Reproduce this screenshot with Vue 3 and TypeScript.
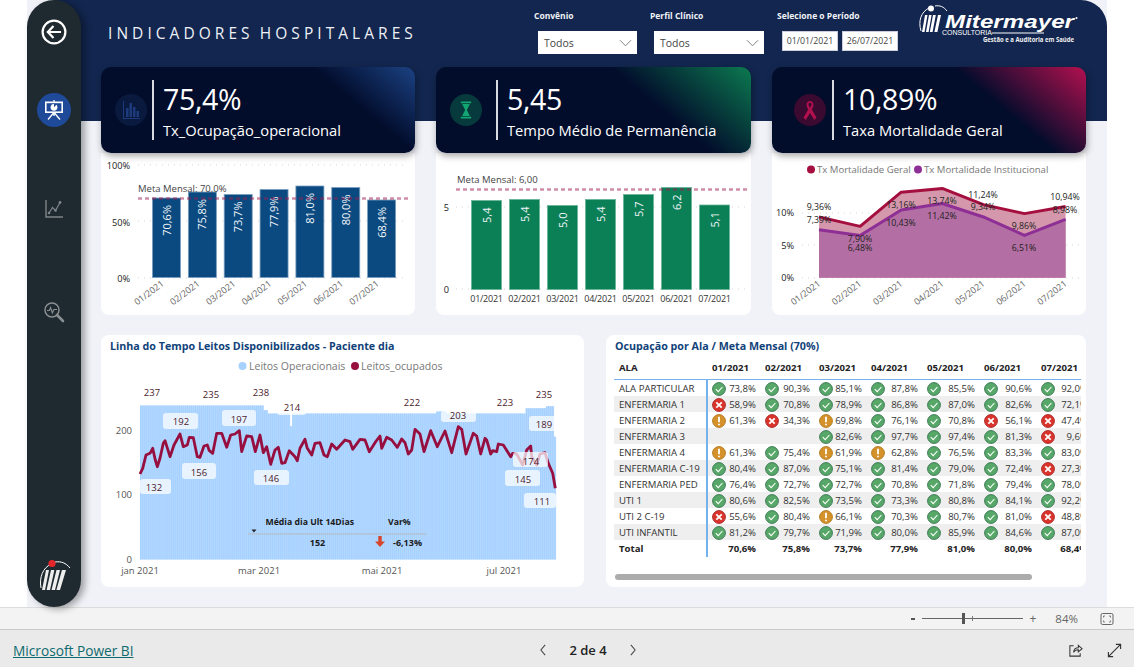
<template>
  <div class="viewer">
    <div class="report">
      <!-- menu lateral -->
      <aside class="sidebar">
        <svg class="nav-back" viewBox="0 0 26 26">
          <circle cx="13" cy="13" r="11.4" fill="none" stroke="#fff" stroke-width="2.2" />
          <path d="M20 13H7M12.5 7 6.8 13l5.7 6" fill="none" stroke="#fff" stroke-width="2.2" />
        </svg>
        <div class="nav-active">
          <svg viewBox="0 0 22 22" width="22" height="22">
            <rect x="2" y="2.5" width="18" height="11.5" fill="#fff" />
            <rect x="3.6" y="4.2" width="14.8" height="8.2" fill="#1f4a99" />
            <circle cx="11" cy="8.3" r="3.4" fill="#fff" />
            <path d="M11 8.3V4.9h3.2z" fill="#1f4a99" />
            <path d="M11 1v2M11 14v3M10.5 14 5 20.5M11.5 14l5.5 6.5" stroke="#fff" stroke-width="1.3" fill="none" />
          </svg>
        </div>
        <svg class="nav-trend" viewBox="0 0 20 20">
          <path d="M2 1v17h17" fill="none" stroke="#7f8588" stroke-width="1.4" />
          <path d="M5 14l3.5-5.5 3 3L16 3.5" fill="none" stroke="#7f8588" stroke-width="1.2" />
          <circle cx="5" cy="14" r="1.3" fill="#7f8588" />
          <circle cx="11.5" cy="11.5" r="1.3" fill="#7f8588" />
          <circle cx="16" cy="3.5" r="1.4" fill="#7f8588" />
        </svg>
        <svg class="nav-search" viewBox="0 0 22 22">
          <circle cx="9" cy="9" r="7" fill="none" stroke="#8a8f92" stroke-width="1.5" />
          <path d="M4 9.5h2.4l1.2-3 1.8 5.4 1.4-3.4H14" fill="none" stroke="#8a8f92" stroke-width="1.1" />
          <path d="M14 14l6 6" stroke="#8a8f92" stroke-width="2.6" stroke-linecap="round" />
        </svg>
        <svg class="nav-logo" viewBox="0 0 34 34">
          <path d="M4 29C2 18 6 9 14 5" fill="none" stroke="#fff" stroke-width="1" />
          <path d="M18 3c6-1 11 1 15 6" fill="none" stroke="#fff" stroke-width="1" />
          <path d="M9 11h3L8 31H5zM14 11h3.4L13 31H9.6zM19.500 11H23l-5 20h-3.500zM25 11h4l-6 20h-3.600z" fill="#eee" />
          <circle cx="15" cy="4.500" r="3.600" fill="#e5262b" />
        </svg>
      </aside>

      <main class="canvas">
        <header class="topbar">
          <h1 class="page-title">INDICADORES HOSPITALARES</h1>
          <div v-for="filter in dropdownFilters" :key="filter.label" class="filter">
            <span class="filter-label">{{ filter.label }}</span>
            <div class="dropdown" :class="filter.sizeClass">
              <span>Todos</span>
              <svg viewBox="0 0 14 8" width="13" height="8"><path d="M1 1l6 6 6-6" fill="none" stroke="#777" /></svg>
            </div>
          </div>
          <div class="filter">
            <span class="filter-label">Selecione o Período</span>
            <div class="date-range">
              <span class="date-box">01/01/2021</span>
              <span class="date-box">26/07/2021</span>
            </div>
          </div>
          <svg class="brand" viewBox="918 0 164 50" width="164" height="50">
            <path d="M921 31c-3-10 0-19 8-23" fill="none" stroke="#fff" stroke-width="1" />
            <path d="M935 6c5-1 9 1 12 5" fill="none" stroke="#fff" stroke-width="1" />
            <path d="M925 15h2.500l-3 17H922zM929 15h2.600l-3 17h-2.600zM933 15h2.800l-3.200 17h-2.800zM938 15h3l-3.600 17h-3z" fill="#fff" />
            <circle cx="931" cy="8.500" r="3" fill="#fff" />
            <text x="945" y="27.500" class="brand-name" textLength="129" lengthAdjust="spacingAndGlyphs">Mitermayer</text>
            <circle cx="1076.500" cy="18" r="1" fill="#fff" />
            <text x="942" y="35" class="brand-sub" textLength="50" lengthAdjust="spacingAndGlyphs">CONSULTORIA</text>
            <path d="M992 33h52" stroke="#fff" />
            <text x="983" y="42" class="brand-tag" textLength="91" lengthAdjust="spacingAndGlyphs">Gestão e a Auditoria em Saúde</text>
          </svg>
        </header>

        <section class="top-grid">
          <!-- Tx ocupação -->
          <div class="panel">
            <div class="kpi kpi-blue">
              <div class="kpi-icon kpi-icon-blue">
                <svg viewBox="0 0 18 18" width="18" height="18" fill="#1c3a7c">
                  <path d="M1 0h1v17h16v1H1zM4 7h2.500v9H4zM7.500 2h2.500v14H7.500zM11 6h2.500v10H11zM14.500 10H17v6h-2.500z" />
                </svg>
              </div>
              <div class="kpi-text">
                <div class="kpi-value">75,4%</div>
                <div class="kpi-label">Tx_Ocupação_operacional</div>
              </div>
            </div>
            <div class="chart-card">
              <svg class="chart" viewBox="101 153 314 162" width="314" height="162">
                <line v-for="y in [165, 221, 278]" :key="y" x1="138" x2="407" :y1="y" :y2="y" class="grid-line" />
                <text x="130" y="168.500" class="axis" text-anchor="end">100%</text>
                <text x="130" y="225.500" class="axis" text-anchor="end">50%</text>
                <text x="130" y="281.500" class="axis" text-anchor="end">0%</text>
                <g v-for="bar in occupancyBars" :key="bar.month">
                  <rect :x="bar.x" :y="bar.top" width="28" :height="277.500 - bar.top" class="bar-blue" />
                  <text :transform="`translate(${bar.x + 18} ${bar.top + 7}) rotate(-90)`" class="bar-label" text-anchor="end">{{ bar.label }}</text>
                  <text :transform="`translate(${bar.x + 12} 285) rotate(-37)`" class="axis-month" text-anchor="end">{{ bar.month }}</text>
                </g>
                <line x1="138" x2="411" y1="198.500" y2="198.500" class="goal-line" />
                <text x="138" y="192" class="goal-label">Meta Mensal: 70,0%</text>
              </svg>
            </div>
          </div>

          <!-- Tempo médio -->
          <div class="panel">
            <div class="kpi kpi-green">
              <div class="kpi-icon kpi-icon-green">
                <svg viewBox="0 0 14 20" width="12" height="18" fill="#12a673">
                  <path d="M1 0h12v2H1zM1 18h12v2H1zM2.500 3h9L8 10l3.500 7h-9L6 10z" />
                </svg>
              </div>
              <div class="kpi-text">
                <div class="kpi-value">5,45</div>
                <div class="kpi-label">Tempo Médio de Permanência</div>
              </div>
            </div>
            <div class="chart-card">
              <svg class="chart" viewBox="436 153 315 162" width="315" height="162">
                <line v-for="y in [207, 289]" :key="y" x1="456" x2="745" :y1="y" :y2="y" class="grid-line" />
                <text x="449" y="210.500" class="axis" text-anchor="end">5</text>
                <text x="449" y="292.500" class="axis" text-anchor="end">0</text>
                <g v-for="bar in stayBars" :key="bar.month">
                  <rect :x="bar.x" :y="bar.top" width="30" :height="289.500 - bar.top" class="bar-green" />
                  <text :transform="`translate(${bar.x + 19} ${bar.top + 7}) rotate(-90)`" class="bar-label" text-anchor="end">{{ bar.label }}</text>
                  <text :x="bar.x + 15" y="301.500" class="axis-month-flat" text-anchor="middle">{{ bar.month }}</text>
                </g>
                <line x1="456" x2="747" y1="189.500" y2="189.500" class="goal-line" />
                <text x="457" y="183" class="goal-label">Meta Mensal: 6,00</text>
              </svg>
            </div>
          </div>

          <!-- Mortalidade -->
          <div class="panel">
            <div class="kpi kpi-red">
              <div class="kpi-icon kpi-icon-red">
                <svg viewBox="0 0 16 22" width="14" height="19" fill="#b3104f">
                  <path d="M8 0c2.500 0 4 2 4 4.500 0 1.800-1 3.500-2 5.300L15.500 19l-2.500 3-5-8-5 8-2.500-3L6 9.800C5 8 4 6.300 4 4.500 4 2 5.500 0 8 0zM8 2C7 2 6.200 3 6.200 4c0 .6.800 2.300 1.800 4 1-1.700 1.800-3.400 1.800-4 0-1-.8-2-1.800-2z" />
                </svg>
              </div>
              <div class="kpi-text">
                <div class="kpi-value">10,89%</div>
                <div class="kpi-label">Taxa Mortalidade Geral</div>
              </div>
            </div>
            <div class="chart-card">
              <svg class="chart" viewBox="772 153 314 162" width="314" height="162">
                <circle cx="811" cy="169.500" r="4" fill="#a50f3f" />
                <text x="817" y="173" class="legend">Tx Mortalidade Geral</text>
                <circle cx="918" cy="169.500" r="4" fill="#8e2f96" />
                <text x="924" y="173" class="legend">Tx Mortalidade Institucional</text>
                <line v-for="y in [213, 245, 278]" :key="y" x1="802" x2="1082" :y1="y" :y2="y" class="grid-line" />
                <text x="794" y="216" class="axis" text-anchor="end">10%</text>
                <text x="794" y="249" class="axis" text-anchor="end">5%</text>
                <text x="794" y="281" class="axis" text-anchor="end">0%</text>
                <path :d="mortalityArea(generalMortality)" fill="#d497ab" />
                <path :d="mortalityArea(institutionalMortality)" fill="#b36fa3" />
                <polyline :points="mortalityPoints(generalMortality)" class="line-general" />
                <polyline :points="mortalityPoints(institutionalMortality)" class="line-institutional" />
                <text v-for="label in mortalityLabels" :key="label.text + label.y" :x="label.x" :y="label.y" class="point-label" text-anchor="middle">{{ label.text }}</text>
                <text v-for="(month, i) in months" :key="month" :transform="`translate(${mortalityX(i) + 2} 285) rotate(-37)`" class="axis-month" text-anchor="end">{{ month }}</text>
              </svg>
            </div>
          </div>
        </section>

        <section class="bottom-grid">
          <div class="card">
            <div class="card-title">Linha do Tempo Leitos Disponibilizados - Paciente dia</div>
            <svg class="chart" viewBox="101 357 483 230" width="483" height="230">
              <circle cx="242.500" cy="366" r="4" fill="#a6d1ff" />
              <text x="249" y="370" class="legend legend-big">Leitos Operacionais</text>
              <circle cx="355" cy="366" r="4" fill="#960f3f" />
              <text x="361" y="370" class="legend legend-big">Leitos_ocupados</text>

              <path :d="bedBars(2.030)" fill="#bcdcff" />
              <path :d="bedBars(1.400)" fill="#a6d1ff" />
              <text x="132" y="433.500" class="axis axis-soft" text-anchor="end">200</text>
              <text x="132" y="498" class="axis axis-soft" text-anchor="end">100</text>
              <text x="132" y="563" class="axis axis-soft" text-anchor="end">0</text>
              <text v-for="tick in timeTicks" :key="tick.text" :x="tick.x" y="574" class="axis axis-soft" text-anchor="middle">{{ tick.text }}</text>

              <polyline :points="occupiedPoints" class="line-occupied" />

              <rect v-for="box in labelBoxes" :key="box.x" :x="box.x" :y="box.y" :width="box.w" :height="box.h" rx="3" class="label-box" />
              <text v-for="label in bedLabels" :key="label.text + label.x" :x="label.x" :y="label.y" class="bed-label" text-anchor="middle">{{ label.text }}</text>

              <!-- tabelinha sobre o gráfico -->
              <text x="265.500" y="525" class="mini-table">Média dia Ult 14Dias</text>
              <text x="388" y="525" class="mini-table">Var%</text>
              <line x1="248" x2="427" y1="534" y2="534" stroke="#b5b9bd" />
              <path d="M251.500 529.500h5l-2.500 3z" fill="#222" />
              <text x="317.500" y="545.500" class="mini-table mini-table-value" text-anchor="middle">152</text>
              <path d="M380 547l-5-5.500h3.300V536h3.400v5.500h3.300z" fill="#d9452b" />
              <text x="393" y="545.500" class="mini-table mini-table-value">-6,13%</text>
            </svg>
          </div>

          <div class="card">
            <div class="card-title">Ocupação por Ala / Meta Mensal (70%)</div>
            <div class="matrix">
              <div class="matrix-row matrix-head">
                <div class="cell-name">ALA</div>
                <div v-for="month in months" :key="month" class="cell-month">{{ month }}</div>
              </div>
              <div v-for="row in wardRows" :key="row.name" class="matrix-row">
                <div class="cell-name">{{ row.name }}</div>
                <div v-for="(value, i) in row.values" :key="i" class="cell-value">
                  <template v-if="value !== null">
                    <svg class="status" viewBox="0 0 14 14" :class="`status-${statusOf(value)}`">
                      <circle cx="7" cy="7" r="6.400" />
                      <path v-if="statusOf(value) === 'ok'" d="M3.800 7.200l2.400 2.400 4.200-4.600" class="status-mark" />
                      <path v-else-if="statusOf(value) === 'bad'" d="M4.300 4.300l5.400 5.400M9.700 4.300l-5.400 5.400" class="status-mark status-mark-bold" />
                      <path v-else d="M7 2.800v5.400M7 9.700v1.600" class="status-mark status-mark-bold" />
                    </svg>
                    <span>{{ formatPct(value) }}</span>
                  </template>
                </div>
              </div>
              <div class="matrix-row matrix-total">
                <div class="cell-name">Total</div>
                <div v-for="value in wardTotals" :key="value" class="cell-value">{{ formatPct(value) }}</div>
              </div>
            </div>
            <div class="matrix-scroll"></div>
          </div>
        </section>
      </main>
    </div>

    <!-- barra de zoom -->
    <div class="zoom-bar">
      <span class="zoom-minus"></span>
      <span class="zoom-slider"><i class="zoom-thumb"></i><i class="zoom-tick"></i></span>
      <span class="zoom-plus">+</span>
      <span class="zoom-value">84%</span>
      <svg viewBox="0 0 14 14" width="14" height="14" class="zoom-fit">
        <rect x="1" y="1.500" width="12" height="11" rx="1.500" fill="none" stroke="#666" />
        <path d="M3.500 5.500v-1.500h1.500M9 4h1.500v1.500M10.500 8.500V10H9M5 10H3.500V8.500" fill="none" stroke="#666" stroke-width=".8" />
      </svg>
    </div>

    <footer class="footer">
      <a class="pbi-link">Microsoft Power BI</a>
      <nav class="pager">
        <svg viewBox="0 0 8 14" width="8" height="12"><path d="M6.500 1 1.500 7l5 6" fill="none" stroke="#444" stroke-width="1.200" /></svg>
        <span>2 de 4</span>
        <svg viewBox="0 0 8 14" width="8" height="12"><path d="M1.500 1l5 6-5 6" fill="none" stroke="#444" stroke-width="1.200" /></svg>
      </nav>
      <div class="footer-actions">
        <svg viewBox="0 0 16 16" width="15" height="15">
          <path d="M6 3H2v11h11v-3" fill="none" stroke="#333" stroke-width="1.100" />
          <path d="M6 10c0-3 2-5 5-5V2.500L15 6l-4 3.500V7.200C9 7.200 7 8 6 10z" fill="none" stroke="#333" stroke-width="1.100" />
        </svg>
        <svg viewBox="0 0 16 16" width="15" height="15">
          <path d="M9.500 1.500h5v5M14.500 1.500l-13 13M1.500 9.500v5h5" fill="none" stroke="#333" stroke-width="1.200" />
        </svg>
      </div>
    </footer>
  </div>
</template>

<script setup lang="ts">
import { computed } from "vue";

interface BarItem {
  month: string;
  label: string;
  x: number;
  top: number;
}

const months = ["01/2021", "02/2021", "03/2021", "04/2021", "05/2021", "06/2021", "07/2021"];

const dropdownFilters = [
  { label: "Convênio", sizeClass: "dropdown-small" },
  { label: "Perfil Clínico", sizeClass: "dropdown-wide" },
];

const makeBars = (labels: string[], tops: number[], startX: number, pitch: number): BarItem[] =>
  labels.map((label, i) => ({
    month: months[i],
    label,
    x: startX + i * pitch,
    top: tops[i],
  }));

const occupancyBars = makeBars(
  ["70,6%", "75,8%", "73,7%", "77,9%", "81,0%", "80,0%", "68,4%"],
  [198, 192, 194.5, 189.5, 186, 187.5, 200],
  152.5,
  35.85,
);

const stayBars = makeBars(
  ["5,4", "5,4", "5,0", "5,4", "5,7", "6,2", "5,1"],
  [200.5, 199.5, 205.5, 199.5, 194.5, 187.5, 205],
  471.5,
  38,
);

// gráfico de mortalidade
const generalMortality = [9.36, 7.9, 13.16, 13.74, 11.24, 9.86, 10.94];
const institutionalMortality = [7.39, 6.48, 10.43, 11.42, 9.34, 6.51, 8.98];

const mortalityX = (i: number) => 819 + i * 41.1;
const mortalityY = (v: number) => 277.7 - v * 6.5;

const mortalityPoints = (values: number[]) =>
  values.map((v, i) => `${mortalityX(i)},${mortalityY(v)}`).join(" ");

const mortalityArea = (values: number[]) =>
  `M${mortalityX(0)} 277.7L${mortalityPoints(values)}L${mortalityX(6)} 277.7Z`;

const mortalityLabels = [
  { text: "9,36%", x: 819, y: 210 },
  { text: "7,39%", x: 819, y: 223 },
  { text: "7,90%", x: 860, y: 242 },
  { text: "6,48%", x: 860, y: 251 },
  { text: "13,16%", x: 901, y: 208 },
  { text: "10,43%", x: 901, y: 226 },
  { text: "13,74%", x: 942, y: 204 },
  { text: "11,42%", x: 942, y: 219 },
  { text: "11,24%", x: 983, y: 198 },
  { text: "9,34%", x: 983, y: 210 },
  { text: "9,86%", x: 1024, y: 229 },
  { text: "6,51%", x: 1024, y: 251 },
  { text: "10,94%", x: 1065, y: 200 },
  { text: "8,98%", x: 1065, y: 213 },
];

// leitos operacionais: uma barra por dia
const BED_BASE = 559.5;
const BED_SCALE = 0.6465;
const BED_DAYS = 205;

const bedsOnDay = (day: number): number => {
  const x = 140 + day * 2.03;
  if (day === 74) return 206;
  if (x < 263) return 238;
  if (x < 267) return 231;
  if (x >= 553) return 190;
  if (x >= 544) return 237;
  if (x >= 525) return 234;
  if (x > 435 && x < 445) return 229;
  return 226;
};

const bedBars = (width: number) => {
  let d = "";
  for (let day = 0; day < BED_DAYS; day++) {
    const x = 140 + day * 2.03;
    const top = BED_BASE - bedsOnDay(day) * BED_SCALE;
    d += `M${x.toFixed(2)} ${top.toFixed(1)}h${width}V${BED_BASE}h-${width}Z`;
  }
  return d;
};

const timeTicks = [
  { text: "jan 2021", x: 140 },
  { text: "mar 2021", x: 259 },
  { text: "mai 2021", x: 382 },
  { text: "jul 2021", x: 504 },
];

// linha de ocupados, traçada sobre o print em escala 3x
const occupiedTrace: [number, number][] = [
  [120, 432], [128, 415], [138, 375], [150, 370], [158, 355], [166, 390], [172, 410], [180, 385],
  [190, 340], [195, 332], [210, 380], [222, 345], [240, 312], [250, 350], [262, 345], [268, 322],
  [280, 323], [292, 380], [300, 382], [312, 348], [322, 345], [328, 362], [338, 370], [350, 310],
  [365, 310], [380, 352], [392, 315], [405, 312], [418, 302], [425, 365], [440, 318], [455, 320],
  [466, 365], [480, 315], [490, 368], [500, 350], [512, 403], [525, 360], [535, 352], [545, 400],
  [555, 398], [568, 362], [585, 380], [592, 392], [600, 355], [615, 328], [622, 355], [635, 375],
  [645, 340], [660, 338], [672, 375], [682, 380], [695, 342], [710, 358], [735, 330], [750, 335],
  [758, 358], [780, 328], [795, 330], [808, 365], [825, 338], [840, 318], [845, 355], [860, 322],
  [875, 330], [892, 352], [905, 327], [915, 338], [925, 372], [935, 360], [945, 298], [960, 312],
  [972, 365], [992, 302], [1012, 350], [1035, 303], [1055, 368], [1075, 290], [1085, 298], [1098, 372],
  [1120, 310], [1130, 318], [1142, 372], [1155, 325], [1160, 330], [1172, 372], [1178, 362], [1190, 365],
  [1195, 342], [1210, 345], [1232, 380], [1238, 370], [1250, 372], [1268, 405], [1280, 360], [1292, 348],
  [1295, 380], [1310, 405], [1320, 372], [1335, 368], [1345, 400], [1358, 430], [1366, 475],
];

const occupiedPoints = computed(() =>
  occupiedTrace.map(([x, y]) => `${(x / 3 + 100).toFixed(1)},${(y / 3 + 330).toFixed(1)}`).join(" "),
);

const labelBoxes = [
  { x: 140, y: 479, w: 31, h: 15 },
  { x: 163, y: 413, w: 35, h: 16 },
  { x: 222, y: 410, w: 34, h: 16 },
  { x: 182, y: 463, w: 34, h: 16 },
  { x: 254, y: 470, w: 35, h: 15 },
  { x: 277, y: 403, w: 29, h: 12 },
  { x: 441, y: 411, w: 35, h: 11 },
  { x: 513, y: 452, w: 35, h: 15 },
  { x: 505, y: 470, w: 35, h: 16 },
  { x: 529, y: 416, w: 27, h: 15 },
  { x: 524, y: 493, w: 32, h: 15 },
];

const bedLabels = [
  { text: "237", x: 152, y: 396 },
  { text: "235", x: 211, y: 398 },
  { text: "238", x: 261, y: 396 },
  { text: "214", x: 292, y: 411 },
  { text: "222", x: 412, y: 406 },
  { text: "223", x: 505, y: 406 },
  { text: "235", x: 544, y: 398 },
  { text: "192", x: 181, y: 425 },
  { text: "197", x: 239, y: 423 },
  { text: "156", x: 199, y: 476 },
  { text: "146", x: 271, y: 482 },
  { text: "132", x: 154, y: 491 },
  { text: "203", x: 458, y: 419 },
  { text: "174", x: 531, y: 465 },
  { text: "145", x: 523, y: 483 },
  { text: "189", x: 544, y: 428 },
  { text: "111", x: 542, y: 505 },
];

// matriz de ocupação
const wardRows: { name: string; values: (number | null)[] }[] = [
  { name: "ALA PARTICULAR", values: [73.8, 90.3, 85.1, 87.8, 85.5, 90.6, 92.0] },
  { name: "ENFERMARIA 1", values: [58.9, 70.8, 78.9, 86.8, 87.0, 82.6, 72.1] },
  { name: "ENFERMARIA 2", values: [61.3, 34.3, 69.8, 76.1, 70.8, 56.1, 47.4] },
  { name: "ENFERMARIA 3", values: [null, null, 82.6, 97.7, 97.4, 81.3, 9.6] },
  { name: "ENFERMARIA 4", values: [61.3, 75.4, 61.9, 62.8, 76.5, 83.3, 83.0] },
  { name: "ENFERMARIA C-19", values: [80.4, 87.0, 75.1, 81.4, 79.0, 72.4, 27.3] },
  { name: "ENFERMARIA PED", values: [76.4, 72.7, 72.7, 70.8, 71.8, 79.4, 78.0] },
  { name: "UTI 1", values: [80.6, 82.5, 73.5, 73.3, 80.8, 84.1, 92.2] },
  { name: "UTI 2 C-19", values: [55.6, 80.4, 66.1, 70.3, 80.7, 81.0, 48.8] },
  { name: "UTI INFANTIL", values: [81.2, 79.7, 71.9, 80.0, 85.9, 84.6, 87.0] },
];

const wardTotals = [70.6, 75.8, 73.7, 77.9, 81.0, 80.0, 68.4];

const statusOf = (value: number) => {
  if (value < 60) return "bad";
  if (value < 70) return "warn";
  return "ok";
};

const formatPct = (value: number) => `${value.toFixed(1).replace(".", ",")}%`;
</script>

<style scoped>
.viewer {
  width: 1134px;
  height: 667px;
  display: flex;
  flex-direction: column;
  overflow: hidden;
  font-family: "Open Sans", "Noto Sans", sans-serif;
  background: #fff;
}

.report {
  height: 607px;
  margin: 0 27px;
  display: flex;
  background: #f1f2f8;
}

.sidebar {
  position: relative;
  z-index: 2;
  flex: 0 0 54px;
  display: flex;
  flex-direction: column;
  align-items: center;
  background: #1f2a30;
  border-radius: 27px;
  box-shadow: 4px 2px 7px rgba(0, 0, 0, 0.35);
}

.nav-back {
  width: 26px;
  height: 26px;
  margin-top: 19px;
}

.nav-active {
  width: 34px;
  height: 34px;
  margin-top: 48px;
  border-radius: 50%;
  background: #1f4a99;
  display: flex;
  align-items: center;
  justify-content: center;
}

.nav-trend {
  width: 20px;
  height: 20px;
  margin-top: 72px;
}

.nav-search {
  width: 22px;
  height: 22px;
  margin-top: 82px;
}

.nav-logo {
  width: 34px;
  height: 34px;
  margin-top: auto;
  margin-bottom: 14px;
}

.canvas {
  flex: 1;
  margin-left: -27px;
  padding: 0 21px 0 47px;
  background: linear-gradient(#12264f 121px, transparent 121px);
  border-top-right-radius: 26px;
  min-width: 0;
}

.topbar {
  height: 67px;
  display: grid;
  grid-template-columns: 433px 116px 127px 141px 160px;
}

.page-title {
  margin: 0;
  padding: 24px 0 0 7px;
  font-size: 15.5px;
  line-height: 18px;
  font-weight: 400;
  letter-spacing: 4.05px;
  word-spacing: -2px;
  color: #eef0f6;
  white-space: nowrap;
}

.filter {
  display: flex;
  flex-direction: column;
  padding-top: 10px;
}

.filter-label {
  font-size: 8.5px;
  line-height: 12px;
  font-weight: 700;
  color: #f1f2f6;
  white-space: nowrap;
}

.dropdown {
  height: 23px;
  margin: 9px 0 0 4px;
  padding: 0 5px 0 6px;
  display: flex;
  align-items: center;
  justify-content: space-between;
  box-sizing: border-box;
  background: #fff;
  font-size: 10.5px;
  color: #444;
}

.dropdown-small {
  width: 99px;
}

.dropdown-wide {
  width: 110px;
}

.date-range {
  margin: 9px 0 0 5px;
  display: flex;
  gap: 4px;
}

.date-box {
  width: 56px;
  height: 20px;
  box-sizing: border-box;
  display: flex;
  align-items: center;
  justify-content: center;
  background: #fff;
  border: 1px solid #ccd;
  font-size: 8.8px;
  color: #444;
}

.brand {
  display: block;
}

.brand-name {
  font-family: "Liberation Sans", sans-serif;
  font-size: 19px;
  font-weight: 700;
  font-style: italic;
  fill: #fff;
}

.brand-sub {
  font-family: "Liberation Sans", sans-serif;
  font-size: 6.5px;
  fill: #fff;
}

.brand-tag {
  font-size: 6.5px;
  font-weight: 700;
  fill: #f1f1f1;
}

.top-grid {
  display: grid;
  grid-template-columns: 314px 315px 314px;
  gap: 21px;
}

.kpi {
  height: 86px;
  display: flex;
  align-items: center;
  box-sizing: border-box;
  border-radius: 10px;
  box-shadow: 1px 3px 7px rgba(0, 0, 0, 0.35);
  position: relative;
  z-index: 1;
  color: #fff;
}

.kpi-blue {
  background: linear-gradient(40deg, #020c2b 75%, #1b4283 100%);
}

.kpi-green {
  background: linear-gradient(40deg, #020c2b 66%, #0c7a50 100%);
}

.kpi-red {
  background: linear-gradient(40deg, #020c2b 68%, #b3104f 100%);
}

.kpi-icon {
  width: 32px;
  height: 32px;
  flex: none;
  border-radius: 50%;
  display: flex;
  align-items: center;
  justify-content: center;
}

.kpi-icon-blue {
  margin: 0 5px 0 14px;
  background: #0a1a3f;
}

.kpi-icon-green {
  margin: 0 14px 0 14px;
  background: #063a3c;
}

.kpi-icon-red {
  margin: 0 6px 0 22px;
  background: #3a0a30;
}

.kpi-text {
  height: 60px;
  padding-left: 9px;
  border-left: 2px solid #d8dbe0;
}

.kpi-value {
  font-size: 28.5px;
  line-height: 37px;
  margin-top: 1px;
  letter-spacing: -0.3px;
}

.kpi-label {
  font-size: 14.7px;
  line-height: 20px;
  margin-top: 2px;
  white-space: nowrap;
}

.chart-card {
  height: 162px;
  background: #fff;
  border-radius: 0 0 8px 8px;
}

.chart {
  display: block;
}

.grid-line {
  stroke: #d5d5d5;
  stroke-dasharray: 1 5;
}

.axis {
  font-size: 9.2px;
  fill: #222;
}

.axis-soft {
  font-size: 9.5px;
  fill: #555;
}

.axis-month {
  font-size: 9px;
  fill: #666;
}

.axis-month-flat {
  font-size: 9px;
  letter-spacing: -0.25px;
  fill: #333;
}

.bar-blue {
  fill: #0a4a80;
  stroke: #7a9dbd;
  stroke-width: 0.8;
}

.bar-green {
  fill: #0b8057;
  stroke: #66b598;
  stroke-width: 0.8;
}

.bar-label {
  font-size: 11px;
  fill: #f3f6fa;
}

.goal-line {
  stroke: #a01c50;
  stroke-opacity: 0.5;
  stroke-width: 2.5;
  stroke-dasharray: 4 3;
}

.goal-label {
  font-size: 9.5px;
  fill: #444;
}

.legend {
  font-size: 9.6px;
  fill: #777;
}

.legend-big {
  font-size: 10.5px;
}

.line-general,
.line-institutional,
.line-occupied {
  fill: none;
  stroke-width: 3;
  stroke-linejoin: round;
}

.line-general {
  stroke: #a50f3f;
}

.line-institutional {
  stroke: #8e2f96;
}

.line-occupied {
  stroke: #960f3f;
  stroke-width: 2.8;
}

.point-label {
  font-size: 8.8px;
  fill: #222;
}

.label-box {
  fill: #fff;
  fill-opacity: 0.72;
}

.bed-label {
  font-size: 9.5px;
  fill: #4a1a2a;
}

.mini-table {
  font-size: 8.7px;
  font-weight: 700;
  fill: #1b1b1b;
}

.mini-table-value {
  font-size: 9px;
}

.bottom-grid {
  margin-top: 20px;
  display: grid;
  grid-template-columns: 483px 480px;
  gap: 22px;
}

.card {
  height: 252px;
  background: #fff;
  border-radius: 8px;
}

.card-title {
  height: 22px;
  padding: 4px 0 0 9px;
  box-sizing: border-box;
  font-size: 10.7px;
  line-height: 15px;
  font-weight: 700;
  color: #11427a;
}

.matrix {
  width: 467px;
  margin: 0 0 0 8px;
  overflow: hidden;
}

.matrix-row {
  display: grid;
  grid-template-columns: 94px 53px 54px 52px 56px 57px 57px 56px;
  height: 16px;
  width: 479px;
  font-size: 9.6px;
  line-height: 18px;
  color: #333;
}

.matrix-row:nth-child(odd):not(.matrix-total):not(.matrix-head) {
  background: #efefef;
}

.matrix-head {
  height: 22px;
  line-height: 21px;
  font-weight: 700;
  border-bottom: 1px solid #74b2ee;
  box-sizing: content-box;
  color: #222;
}

.cell-name {
  padding-left: 5px;
  white-space: nowrap;
  overflow: hidden;
  box-sizing: border-box;
}

.matrix-row:not(.matrix-head) .cell-name {
  border-right: 2px solid #74b2ee;
}

.cell-month {
  padding-left: 4px;
}

.cell-value {
  display: flex;
  align-items: center;
  justify-content: space-between;
  padding: 0 5px 0 4px;
}

.matrix-total {
  font-weight: 700;
  height: 17px;
  color: #222;
}

.matrix-total .cell-value {
  justify-content: flex-end;
}

.status {
  width: 14px;
  height: 14px;
  flex: none;
}

.status-ok circle {
  fill: #57a868;
  stroke: #3f7a58;
}

.status-bad circle {
  fill: #d9342b;
  stroke: #b02a2a;
}

.status-warn circle {
  fill: #d6922a;
  stroke: #b67c22;
}

.status-mark {
  fill: none;
  stroke: #fff;
  stroke-width: 1.1;
}

.status-mark-bold {
  stroke-width: 1.8;
}

.matrix-scroll {
  width: 417px;
  height: 6px;
  margin: 17px 0 0 9px;
  border-radius: 3px;
  background: #acacac;
}

.zoom-bar {
  height: 23px;
  box-sizing: border-box;
  border-top: 1px solid #dcdcdc;
  border-bottom: 1px solid #c9c9c9;
  display: flex;
  align-items: center;
  justify-content: flex-end;
  padding-right: 20px;
  background: #f3f3f3;
  font-size: 11.5px;
  color: #666;
}

.zoom-minus {
  width: 4px;
  height: 2px;
  margin-right: 7px;
  background: #555;
}

.zoom-slider {
  position: relative;
  width: 101px;
  height: 1px;
  background: #666;
}

.zoom-thumb {
  position: absolute;
  left: 40px;
  top: -5px;
  width: 3px;
  height: 11px;
  background: #555;
}

.zoom-tick {
  position: absolute;
  left: 50px;
  top: -2px;
  width: 1px;
  height: 5px;
  background: #777;
}

.zoom-plus {
  margin-left: 6px;
  font-size: 12px;
}

.zoom-value {
  margin-left: 19px;
}

.zoom-fit {
  margin-left: 22px;
}

.footer {
  flex: 1;
  display: flex;
  align-items: center;
  padding: 3px 12px 0 13px;
  background: #eaeaea;
}

.pbi-link {
  width: 526px;
  font-size: 13.7px;
  color: #0e6a6e;
  text-decoration: underline;
}

.pager {
  width: 98px;
  display: flex;
  align-items: center;
  justify-content: space-between;
  font-size: 13px;
  font-weight: 600;
  color: #222;
}

.footer-actions {
  margin-left: auto;
  display: flex;
  gap: 24px;
}
</style>

<style>
html,
body {
  margin: 0;
  background: #fff;
}
</style>
